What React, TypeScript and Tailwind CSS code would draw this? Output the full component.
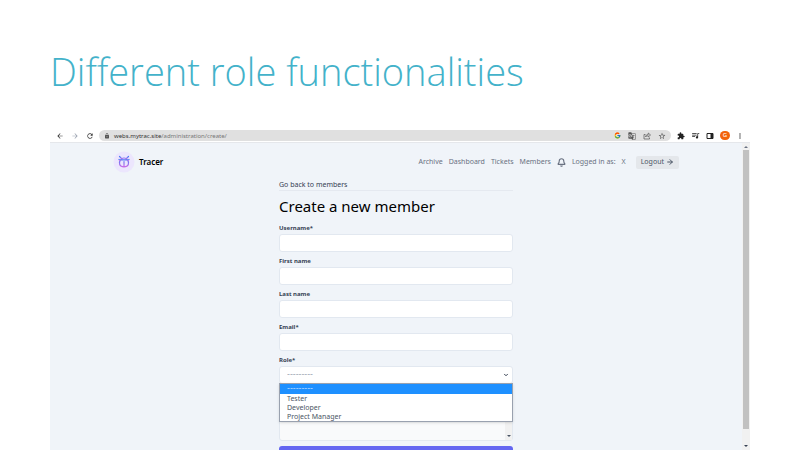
import { ArrowRight, Bell, ChevronDown } from "lucide-react";
import { FcGoogle } from "react-icons/fc";
import {
  MdArrowBack,
  MdArrowForward,
  MdExtension,
  MdGTranslate,
  MdLock,
  MdMoreVert,
  MdOutlineStarBorder,
  MdQueueMusic,
  MdRefresh,
} from "react-icons/md";

const fields = [
  { id: "username", label: "Username*", type: "text" },
  { id: "first-name", label: "First name", type: "text" },
  { id: "last-name", label: "Last name", type: "text" },
  { id: "email", label: "Email*", type: "email" },
];

const links = ["Archive", "Dashboard", "Tickets", "Members"];
const roles = ["---------", "Tester", "Developer", "Project Manager"];

function BugLogo() {
  return (
    <svg viewBox="0 0 22 22" className="size-[22px]" aria-hidden="true">
      <defs>
        <linearGradient id="bug" x1="0" y1="0" x2="0" y2="1">
          <stop offset="0" stopColor="#4f7df5" />
          <stop offset="1" stopColor="#c86be8" />
        </linearGradient>
      </defs>
      <circle cx="11" cy="11" r="10.5" fill="#ece6fd" />
      <g fill="none" stroke="url(#bug)" strokeWidth="1.2" strokeLinecap="round" strokeLinejoin="round">
        <path d="M6.500 5.500 9 8M15.500 5.500 13 8M8 8.500C9 6.500 13 6.500 14 8.500" />
        <path d="M7.500 8.800h7c2.200 3 1.200 7-3.500 7s-5.700-4-3.500-7zM11 10.500v5.300" />
        <path d="M7 9.500 6 8.500M15 9.500 16 8.500" />
      </g>
    </svg>
  );
}

function ShareIcon() {
  return (
    <svg viewBox="0 0 16 16" className="size-2" fill="none" stroke="currentColor" strokeWidth="1.4" aria-hidden="true">
      <path d="M5 5H2v9h11v-3M5 10c.4-3.5 2.500-5 5.500-5V2l4.500 4-4.500 4V7.500C8 7.500 6.500 8 5 10Z" />
    </svg>
  );
}

function SidePanelIcon() {
  return (
    <svg viewBox="0 0 16 16" className="size-2" aria-hidden="true">
      <path d="M2 3h12v10H2z" fill="none" stroke="currentColor" strokeWidth="2" />
      <path d="M9 3h5v10H9z" fill="currentColor" />
    </svg>
  );
}

function BrowserBar() {
  return (
    <div className="flex h-[14px] shrink-0 items-center border-b border-gray-200 bg-white px-[6px] text-[#333]">
      <div className="flex items-center gap-[7px]">
        <button aria-label="Back"><MdArrowBack className="size-2" /></button>
        <button aria-label="Forward" className="text-gray-400"><MdArrowForward className="size-2" /></button>
        <button aria-label="Reload"><MdRefresh className="size-2" /></button>
      </div>
      <div className="ml-[5px] flex h-[11px] flex-1 items-center rounded-full bg-[#e0e0e0] px-[5px] text-[#555]">
        <MdLock className="size-[6px]" />
        <div className="ml-[4px] text-[6px] leading-[10px] text-[#777]">
          <span className="text-[#333]">webs.mytrac.site</span>/administration/create/
        </div>
        <div className="ml-auto flex items-center gap-[7px]">
          <FcGoogle className="size-[7px]" />
          <MdGTranslate className="size-2" />
          <ShareIcon />
          <button aria-label="Bookmark"><MdOutlineStarBorder className="size-2" /></button>
        </div>
      </div>
      <div className="ml-[6px] flex items-center gap-[6px] text-[#222]">
        <button aria-label="Extensions"><MdExtension className="size-2" /></button>
        <button aria-label="Media"><MdQueueMusic className="size-[9px]" /></button>
        <button aria-label="Side panel"><SidePanelIcon /></button>
        <span className="flex h-[9px] w-[10px] items-center justify-center rounded-full bg-[#f2640c] text-[6px] text-white">G</span>
        <button aria-label="Menu"><MdMoreVert className="size-2" /></button>
      </div>
    </div>
  );
}

function NavBar() {
  return (
    <header className="mx-auto flex w-full max-w-[566px] items-center">
      <a href="#home" className="flex items-center gap-[4px] text-[8px] font-semibold text-black">
        <BugLogo />
        Tracer
      </a>
      <nav className="ml-auto flex items-center gap-[6px] text-[7px] text-gray-500">
        {links.map((link) => (
          <a key={link} href={"#" + link.toLowerCase()}>{link}</a>
        ))}
        <Bell className="size-[9px]" strokeWidth={3} />
        <span>Logged in as:</span>
        <span className="mr-[4px]">X</span>
        <button className="flex h-[13px] items-center gap-[2px] rounded-xs bg-[#e4e7eb] px-[5px] text-gray-600">
          Logout
          <ArrowRight className="size-2" strokeWidth={3} />
        </button>
      </nav>
    </header>
  );
}

function MemberForm() {
  return (
    <main className="mx-auto mt-[7px] w-[234px]">
      <div className="border-b border-[#e5e9f0]">
        <a href="#members" className="block text-[7px] leading-[10px] text-gray-700">Go back to members</a>
      </div>
      <h1 className="mt-[4px] text-[15px] leading-[22px] text-black">Create a new member</h1>
      <form className="mt-[6px]">
        {fields.map((field) => (
          <div key={field.id} className="mb-[4px]">
            <label htmlFor={field.id} className="block text-[6px] leading-[11px] font-bold text-gray-700">{field.label}</label>
            <input id={field.id} type={field.type} className="block h-[18px] w-full rounded-[3px] border border-[#e2e8f0] bg-white px-[7px] text-[7px]" />
          </div>
        ))}
        <div className="relative">
          <label htmlFor="role" className="block text-[6px] leading-[11px] font-bold text-gray-700">Role*</label>
          <select id="role" className="block h-[18px] w-full appearance-none rounded-[3px] border border-[#e2e8f0] bg-white px-[7px] font-['DejaVu_Sans',sans-serif] text-[8px] text-gray-400">
            {roles.map((role) => (
              <option key={role}>{role}</option>
            ))}
          </select>
          <ChevronDown className="absolute top-[17px] right-[4px] size-[6px] text-gray-700" strokeWidth={4} />
          <ul className="absolute inset-x-0 top-[28px] border border-gray-400 bg-white text-[7px] leading-[9px] text-gray-600 shadow-sm">
            {roles.map((role, index) => (
              <li key={role} className={index === 0 ? "h-[10px] bg-[#1e90ff] px-[7px] font-['DejaVu_Sans',sans-serif] text-[8px] leading-[10px] text-blue-200" : "px-[7px]"}>{role}</li>
            ))}
          </ul>
        </div>
        <div className="mt-[4px] flex h-[53px] items-end justify-end rounded-[3px] border border-[#e2e8f0] bg-[#f9fafb]">
          <div className="flex h-full w-[7px] items-end justify-center bg-[#f1f1f1] pb-[3px]">
            <span className="h-0 w-0 border-x-2 border-t-2 border-x-transparent border-t-gray-600" />
          </div>
        </div>
        <button type="submit" aria-label="Create member" className="mt-[5px] block h-[18px] w-full rounded-[3px] bg-[#6366f1]" />
      </form>
    </main>
  );
}

export default function App() {
  return (
    <div className="flex h-screen flex-col overflow-hidden bg-white px-[50px] font-['Noto_Sans','Open_Sans',sans-serif]">
      <h2 className="shrink-0 pt-[41px] pb-[28px] font-['Open_Sans','Noto_Sans',sans-serif] text-[38px] leading-[60px] font-light whitespace-nowrap text-[#43b2ca]">
        Different role functionalities
      </h2>
      <section className="flex min-h-0 flex-1 flex-col">
        <BrowserBar />
        <div className="flex min-h-0 flex-1 bg-[#f0f4f9]">
          <div className="min-w-0 flex-1 overflow-hidden pt-[8px]">
            <NavBar />
            <MemberForm />
          </div>
          <div className="flex w-2 flex-col items-center bg-[#f1f1f1] py-[3px]">
            <span className="h-0 w-0 border-x-2 border-b-2 border-x-transparent border-b-gray-500" />
            <span className="mt-[2px] mb-[16px] w-[6px] flex-1 bg-[#c1c1c1]" />
            <span className="h-0 w-0 border-x-2 border-t-2 border-x-transparent border-t-gray-700" />
          </div>
        </div>
      </section>
    </div>
  );
}
